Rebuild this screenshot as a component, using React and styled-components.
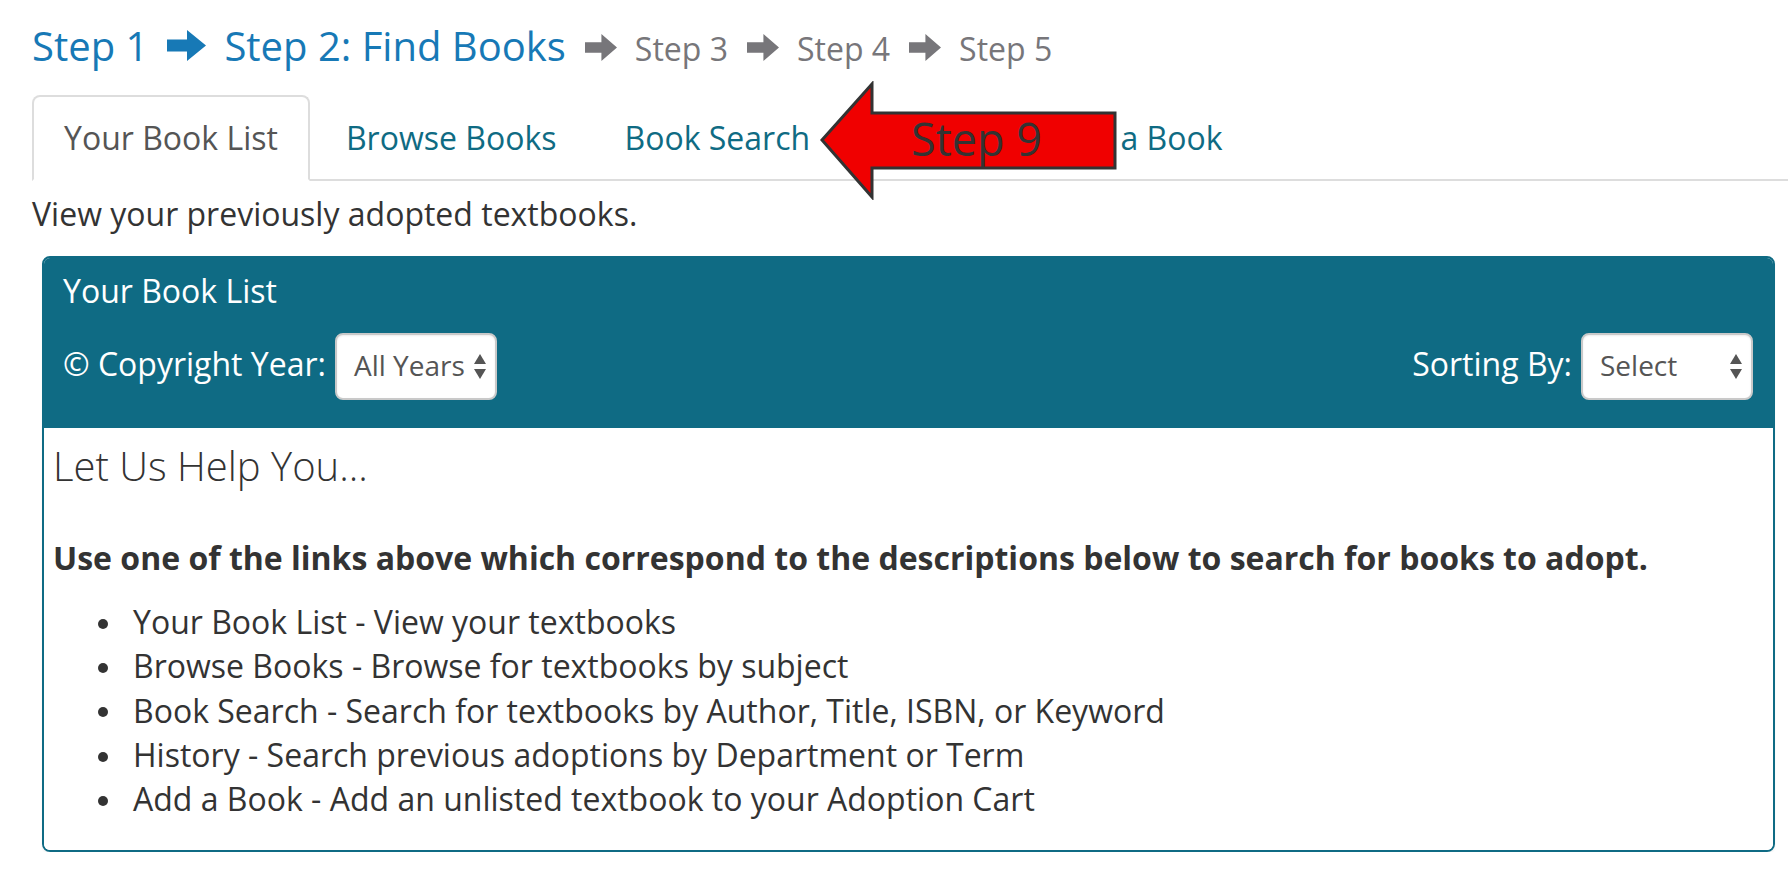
import React from "react";
import styled, { createGlobalStyle } from "styled-components";

const GlobalStyle = createGlobalStyle`
  body {
    margin: 0;
    background: #fff;
    font-family: "Open Sans", "Noto Sans", sans-serif;
    color: #333;
  }
`;

const tabs = ["Your Book List", "Browse Books", "Book Search", "History", "Add a Book"];

const helpItems = [
  "Your Book List - View your textbooks",
  "Browse Books - Browse for textbooks by subject",
  "Book Search - Search for textbooks by Author, Title, ISBN, or Keyword",
  "History - Search previous adoptions by Department or Term",
  "Add a Book - Add an unlisted textbook to your Adoption Cart",
];

const Arrow = ({ color, w, h }) => (
  <ArrowSvg viewBox="0 0 39 31" width={w} height={h} preserveAspectRatio="none">
    <polygon points="0,9.5 20,9.5 20,0 39,15.5 20,31 20,21.5 0,21.5" fill={color} />
  </ArrowSvg>
);

const Caret = () => (
  <CaretSvg viewBox="0 0 12 25" width="12" height="25">
    <polygon points="0,10 6,0 12,10" fill="#555" />
    <polygon points="0,15 12,15 6,25" fill="#555" />
  </CaretSvg>
);

export default function App() {
  return (
    <Page>
      <GlobalStyle />
      <Steps>
        <Step big active>Step 1</Step>
        <Arrow color="#1779b6" w={39} h={31} />
        <Step big active>Step 2: Find Books</Step>
        <Arrow color="#77767a" w={32} h={27} />
        <Step>Step 3</Step>
        <Arrow color="#77767a" w={32} h={27} />
        <Step>Step 4</Step>
        <Arrow color="#77767a" w={32} h={27} />
        <Step>Step 5</Step>
      </Steps>

      <NavTabs>
        {tabs.map((t, i) => (
          <Tab key={t} active={i === 0}>
            {t}
          </Tab>
        ))}
      </NavTabs>

      <Intro>View your previously adopted textbooks.</Intro>

      <Panel>
        <PanelHeader>
          <PanelTitle>Your Book List</PanelTitle>
          <Controls>
            <Group>
              <Label>© Copyright Year:</Label>
              <Select w={162}>
                All Years
                <Caret />
              </Select>
            </Group>
            <Group>
              <Label>Sorting By:</Label>
              <Select w={172}>
                Select
                <Caret />
              </Select>
            </Group>
          </Controls>
        </PanelHeader>
        <PanelBody>
          <HelpTitle>Let Us Help You...</HelpTitle>
          <Lead>
            Use one of the links above which correspond to the descriptions below to
            search for books to adopt.
          </Lead>
          <HelpList>
            {helpItems.map((item) => (
              <HelpItem key={item}>
                <Dot />
                {item}
              </HelpItem>
            ))}
          </HelpList>
        </PanelBody>
      </Panel>

      <Callout>
        <svg viewBox="0 0 298 119" width="298" height="119">
          <polygon
            points="2,59 52,3 52,32 295,32 295,87 52,87 52,116"
            fill="#f00000"
            stroke="#333"
            strokeWidth="3"
            strokeLinejoin="miter"
          />
        </svg>
        <CalloutText>Step 9</CalloutText>
      </Callout>
    </Page>
  );
}

const Page = styled.div`
  position: relative;
  padding: 19px 0 0 32px;
  width: 1788px;
  box-sizing: border-box;
`;

const Steps = styled.div`
  display: flex;
  align-items: baseline;
  height: 54px;
  line-height: 54px;
`;

const Step = styled.span`
  font-size: ${(p) => (p.big ? "40px" : "32px")};
  color: ${(p) => (p.active ? "#1779b6" : "#77767a")};
  white-space: nowrap;
`;

const ArrowSvg = styled.svg`
  margin: 0 18px 1px 19px;
  display: block;
`;

const NavTabs = styled.ul`
  display: flex;
  list-style: none;
  margin: 22px 0 0 0;
  padding: 0;
  border-bottom: 2px solid #ddd;
`;

const Tab = styled.li`
  margin: 0 4px -2px 0;
  padding: 18px 30px;
  line-height: 46px;
  font-size: 32px;
  white-space: nowrap;
  border: 2px solid ${(p) => (p.active ? "#ddd" : "transparent")};
  border-bottom-color: ${(p) => (p.active ? "#fff" : "transparent")};
  border-radius: 8px 8px 0 0;
  background: ${(p) => (p.active ? "#fff" : "transparent")};
  color: ${(p) => (p.active ? "#555" : "#0f6b83")};
`;

const Intro = styled.p`
  margin: 10px 0 0;
  font-size: 32px;
  line-height: 46px;
  color: #333;
`;

const Panel = styled.section`
  margin: 19px 13px 0 10px;
  border: 2px solid #0f6b84;
  border-radius: 8px;
  box-shadow: 0 2px 2px rgba(0, 0, 0, 0.05);
  overflow: hidden;
`;

const PanelHeader = styled.div`
  background: #0f6b84;
  color: #fff;
  padding: 10px 20px 28px 19px;
`;

const PanelTitle = styled.div`
  font-size: 32px;
  line-height: 46px;
`;

const Controls = styled.div`
  display: flex;
  justify-content: space-between;
  align-items: baseline;
  margin-top: 19px;
`;

const Group = styled.div`
  display: flex;
  align-items: baseline;
  gap: 9px;
`;

const Label = styled.span`
  font-size: 32px;
  line-height: 46px;
  white-space: nowrap;
`;

const Select = styled.div`
  position: relative;
  box-sizing: border-box;
  width: ${(p) => p.w}px;
  height: 67px;
  padding: 11px 0 14px 17px;
  font-size: 28px;
  line-height: 38px;
  color: #555;
  background: #fff;
  border: 2px solid #c9c9c9;
  border-radius: 8px;
  box-shadow: inset 0 1px 2px rgba(0, 0, 0, 0.08);
`;

const CaretSvg = styled.svg`
  position: absolute;
  right: 9px;
  top: 19px;
`;

const PanelBody = styled.div`
  background: #fff;
  padding: 16px 20px 29px 9px;
`;

const HelpTitle = styled.h3`
  margin: 0;
  font-size: 40px;
  font-weight: 300;
  line-height: 44px;
  color: #333;
`;

const Lead = styled.p`
  margin: 47px 0 0;
  font-size: 32px;
  font-weight: 700;
  line-height: 46px;
  color: #333;
`;

const HelpList = styled.ul`
  list-style: none;
  margin: 19px 0 0;
  padding: 0;
`;

const HelpItem = styled.li`
  display: flex;
  align-items: center;
  font-size: 32px;
  line-height: 44.3px;
  color: #333;
`;

const Dot = styled.span`
  flex: 0 0 10px;
  height: 10px;
  margin: 3px 25px 0 45px;
  border-radius: 50%;
  background: #333;
`;

const Callout = styled.div`
  position: absolute;
  left: 820px;
  top: 81px;
  width: 298px;
  height: 119px;

  svg {
    display: block;
  }
`;

const CalloutText = styled.span`
  position: absolute;
  left: 91px;
  top: 35px;
  font-size: 45px;
  line-height: 46px;
  color: #333;
  white-space: nowrap;
`;
